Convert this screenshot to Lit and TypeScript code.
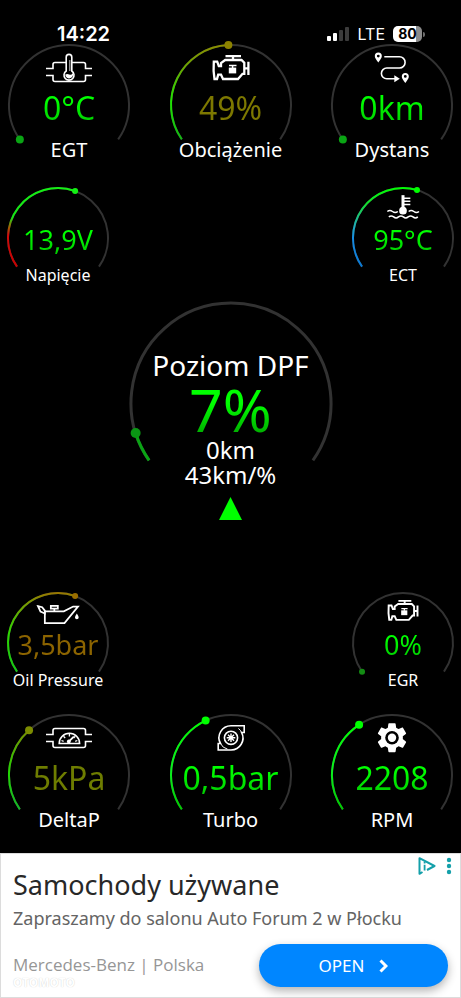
import { LitElement, html, svg, css, nothing } from "lit";
import { customElement, property } from "lit/decorators.js";
import { classMap } from "lit/directives/class-map.js";

const START = 145;
const SWEEP = 250;

/** Point on a circle; degrees run clockwise from the right. */
const polar = (c: number, r: number, deg: number) => {
  const a = (deg * Math.PI) / 180;
  return { x: c + r * Math.cos(a), y: c + r * Math.sin(a) };
};

const arc = (c: number, r: number, from: number, to: number) => {
  const a = polar(c, r, from);
  const b = polar(c, r, to);
  const large = to - from > 180 ? 1 : 0;
  return `M${a.x.toFixed(2)} ${a.y.toFixed(2)}A${r} ${r} 0 ${large} 1 ${b.x.toFixed(2)} ${b.y.toFixed(2)}`;
};

type Stop = [offset: number, color: string];

const canister = svg`
  <path d="M1 15.5H8V11.5q0-2 2-2H38.5q2 0 2 2V15.5H47M1 22.5H8V26.5q0 2 2 2H38.5q2 0 2-2V22.5H47" />`;

const engine = svg`
  <g stroke-width="2.3">
    <path d="M18.5 3.2H34M26 3.2V7" />
    <path d="M6.8 8.7H10.2L11.8 13H14V10L18.2 7H34.5L37.3 9.8V20.8H35.5L31 26H16L14 21.6H11.2L10 26H7.5L6.6 18Z" />
    <path d="M37.5 15.3H41M41.4 8.7V22" />
    <path d="M22 12.4H29.5M25.6 12V15" stroke-width="1.5" />
  </g>
  <rect x="21.8" y="14.6" width="7.4" height="5.8" fill="#fff" stroke="none" />`;

const pin = (x: number, y: number) => svg`
  <path fill="#fff" stroke="none" fill-rule="evenodd" transform=${`translate(${x} ${y})`}
    d="M0 5.6C-2.2 2.6-3.5 1-3.5-.9A3.5 3.5 0 0 1 3.5-.9C3.5 1 2.2 2.6 0 5.6ZM0-2.3A1.4 1.4 0 1 0 0 .5 1.4 1.4 0 1 0 0-2.3Z" />`;

const ICONS: Record<string, unknown> = {
  egt: svg`${canister}
    <path fill="#000" d="M21.2 18V4.2a2.8 2.8 0 0 1 5.6 0V18a5 5 0 1 1-5.6 0Z" />
    <path d="M24.8 7V18" stroke-width="1.4" opacity=".6" />
    <path fill="#fff" stroke="none" d="M20.3 21.5q2-1.2 4 0t3.5-1.5a3.9 3.9 0 1 1-7.5 1.5Z" />`,
  engine,
  route: svg`
    ${pin(10.3, 4)}
    <path d="M16.3 3.8H31.5a5.6 5.6 0 0 1 0 11.2H18.8a5.4 5.4 0 0 0 0 10.8H27" />
    <path fill="#fff" stroke="none" d="M26.3 22.3L31.8 25.8L26.3 29.3Z" />
    ${pin(37.3, 24.3)}`,
  coolant: svg`
    <path d="M24 2.4V20" stroke-width="3.6" />
    <circle cx="24" cy="21" r="4.6" fill="#fff" stroke="none" />
    <path d="M25 6H32.8M25 9.8H32.8M25 13.5H32.8" stroke-width="1.8" />
    <path stroke-width="1.8" d="M5.2 22q3-2.4 6.2 0t6.4 0M30.8 22q3-2.4 6.2 0t6.2 0M7 28.5q2.9-2.4 5.8 0t5.8 0 5.8 0 5.8 0 5.8 0 5.8 0" />`,
  oil: svg`
    <g stroke-width="2.1">
      <path d="M8.2 15.8H31L42.2 10H48L31.8 30H8.2Z" />
      <path d="M0 9.6L5 10.8L8.2 15V18.4L3 16.2Z" />
      <path d="M15.4 9.3H23.8V12.4H15.4ZM19.6 12.4V15.6" />
    </g>
    <path fill="#fff" stroke="none" d="M46.6 18.4q4.4 6.4 0 6.8-4.4-.4 0-6.8Z" />`,
  pressure: svg`
    <g transform="translate(0 -4)">${canister}</g>
    <path d="M14.2 20.5a10.2 10.2 0 0 1 20.4 0Z" />
    <path d="M16.5 17.5L18.6 18.3M18.5 13.3L20.2 15M24.4 11V13.4M30.3 13.3L28.6 15M32.3 17.5L30.2 18.3" stroke-width="1.3" />
    <path d="M23.5 18.8L28.8 13.6" stroke-width="1.8" />
    <circle cx="23.8" cy="18.5" r="1.9" fill="#fff" stroke="none" />`,
  turbo: svg`
    <path d="M24 2.7H37.2V9.5H34.6A12 12 0 0 1 24 27H11.2V20.5H13.5A12 12 0 0 1 24 2.7Z" />
    <path d="M13.5 20.5q2 4.5 7 5.6M34.6 9.5q-1-2.5-3.2-4" stroke-width="1" />
    <circle cx="24" cy="14.8" r="6.6" />
    <path d="M24 10.5V19.1M19.7 14.8H28.3M21 11.8L27 17.8M27 11.8L21 17.8" stroke-width="1.4" />`,
  gear: svg`
    <g stroke="none" fill="#fff">
      <path transform="translate(6.6 -2.7) scale(1.45)"
        d="M19.430 12.980c.04-.32.07-.64.07-.98s-.03-.66-.07-.98l2.110-1.650c.19-.15.24-.42.120-.64l-2-3.460c-.12-.22-.39-.3-.61-.22l-2.490 1c-.52-.4-1.080-.73-1.690-.98l-.38-2.650C14.460 2.180 14.250 2 14 2h-4c-.25 0-.46.18-.49.42l-.38 2.650c-.61.25-1.170.59-1.690.98l-2.490-1c-.23-.09-.49 0-.61.22l-2 3.460c-.13.22-.07.49.12.64l2.110 1.650c-.04.32-.07.65-.07.98s.03.66.07.98l-2.110 1.650c-.19.15-.24.42-.12.64l2 3.460c.12.22.39.3.61.22l2.490-1c.52.4 1.080.73 1.690.98l.38 2.650c.03.24.24.42.49.42h4c.25 0 .46-.18.49-.42l.38-2.650c.61-.25 1.170-.59 1.690-.98l2.490 1c.23.09.49 0 .61-.22l2-3.460c.12-.22.07-.49-.12-.64l-2.110-1.650Z" />
      <circle cx="24" cy="14.7" r="6.8" fill="#000" />
      <circle cx="24" cy="14.7" r="4.2" />
    </g>`,
};

const FADE: Record<string, Stop[]> = {
  green: [[0, "#0f0"], [0.6, "#0af01e"], [1, "#00c800"]],
  load: [[0, "#8c8c00"], [0.25, "#6aa800"], [0.6, "#1ee600"], [1, "#14b414"]],
  oil: [[0, "#9a7400"], [0.12, "#7e9600"], [0.5, "#2ed800"], [1, "#14c814"]],
  delta: [[0, "#7c8c00"], [0.16, "#7c8c00"], [0.6, "#22d800"], [1, "#14b428"]],
  volt: [[0, "#14f014"], [0.38, "#14e614"], [0.5, "#a06400"], [0.6, "#d20a0a"], [1, "#c80000"]],
  temp: [[0, "#0f0"], [0.22, "#14dc32"], [0.5, "#1eaabe"], [0.65, "#148ce6"], [1, "#0a78d2"]],
  low: [[0, "#0a9614"], [1, "#0aa514"]],
};

@customElement("arc-dial")
class ArcDial extends LitElement {
  @property({ type: Number }) radius = 60;
  @property({ type: Number }) level = 0;
  @property({ type: Number }) dot = 4;
  @property({ type: Number }) line = 2;
  @property() fade = "green";
  @property() tip = "#0f0";

  static styles = css`
    :host { display: block; }
    .dial { display: block; width: 100%; height: auto; overflow: visible; }
  `;

  render() {
    const c = this.radius + 1;
    const end = START + SWEEP * this.level;
    const knob = polar(c, this.radius, end);
    const floor = polar(c, this.radius, START).y;
    return html`
      <svg class="dial" viewBox=${`0 0 ${2 * c} ${2 * c}`} fill="none" aria-hidden="true">
        <defs>
          <linearGradient id="fade" gradientUnits="userSpaceOnUse" x1="0" y1="0" x2="0" y2=${floor}>
            ${FADE[this.fade].map(([o, color]) => svg`<stop offset=${o} stop-color=${color} />`)}
          </linearGradient>
        </defs>
        <path d=${arc(c, this.radius, START, START + SWEEP)} stroke="#323232" stroke-width=${this.line} />
        ${this.level > 0
          ? svg`<path d=${arc(c, this.radius, START, end)} stroke="url(#fade)" stroke-width=${this.line} />`
          : nothing}
        <circle cx=${knob.x} cy=${knob.y} r=${this.dot} fill=${this.tip} />
      </svg>`;
  }
}

interface Reading {
  label: string;
  value: string;
  level: number;
  icon?: string;
  fade: string;
  tip: string;
  tone?: string;
}

@customElement("gauge-card")
class GaugeCard extends LitElement {
  @property({ attribute: false }) reading!: Reading;
  @property({ type: Boolean }) small = false;

  static styles = css`
    :host { display: block; }
    .card {
      position: relative;
      display: flex;
      flex-direction: column;
      align-items: center;
      width: 122px;
      padding-top: 9px;
      box-sizing: border-box;
      white-space: nowrap;
    }
    .ring { position: absolute; inset: 0; }
    .icon {
      position: relative;
      width: 48px;
      height: 32px;
      fill: none;
      stroke: #fff;
      stroke-width: 1.6;
      overflow: visible;
    }
    .value {
      position: relative;
      margin-top: 5px;
      font-size: 32px;
      line-height: 36px;
      background: linear-gradient(#0f0 30%, #00c800);
      background-clip: text;
      color: transparent;
    }
    .olive { background: #7d7800; background-clip: text; }
    .moss { background: #6e7d00; background-clip: text; }
    .amber { background: #8c6400; background-clip: text; }
    .label { position: relative; margin-top: 12px; font-size: 20px; line-height: 24px; }
    .small { width: 102px; padding-top: 6px; }
    .small .icon { width: 40px; height: 27px; }
    .small .value { margin-top: 5px; font-size: 27px; line-height: 30px; }
    .small .label { margin-top: 10px; font-size: 16px; line-height: 20px; }
  `;

  render() {
    const r = this.reading;
    return html`
      <div class=${classMap({ card: true, small: this.small })}>
        <arc-dial class="ring" .radius=${this.small ? 50 : 60} .level=${r.level}
          .dot=${this.small ? 3 : 4} .fade=${r.fade} .tip=${r.tip}></arc-dial>
        <svg class="icon" viewBox="0 0 48 32" aria-hidden="true">${r.icon ? ICONS[r.icon] : nothing}</svg>
        <div class="value ${r.tone ?? ""}">${r.value}</div>
        <div class="label">${r.label}</div>
      </div>`;
  }
}

@customElement("status-bar")
class StatusBar extends LitElement {
  static styles = css`
    :host {
      display: flex;
      justify-content: space-between;
      align-items: center;
      height: 20px;
      padding: 24px 36px 0 57px;
      font-family: Inter, "Liberation Sans", sans-serif;
    }
    .time { font-size: 20px; line-height: 20px; font-weight: 600; }
    .right { display: flex; align-items: center; gap: 8px; }
    .bars { display: block; width: 24px; height: 15px; }
    .net { font-size: 16px; line-height: 20px; font-weight: 400; }
    .battery { display: flex; align-items: center; gap: 1px; }
    .cell {
      width: 29px;
      border-radius: 5px;
      background: linear-gradient(90deg, #fff 80%, #8c8c8c 80%);
      color: #000;
      font-size: 14px;
      line-height: 16px;
      font-weight: 700;
      text-align: center;
    }
    .cap { width: 2px; height: 5px; border-radius: 0 2px 2px 0; background: #6e6e6e; }
  `;

  render() {
    return html`
      <span class="time">14:22</span>
      <div class="right">
        <svg class="bars" viewBox="0 0 24 15" aria-hidden="true">
          <rect x="1" y="9" width="4" height="5" rx="1" fill="#fff" />
          <rect x="7" y="6" width="4" height="8" rx="1" fill="#fff" />
          <rect x="13" y="3" width="4" height="11" rx="1" fill="#3c3c3c" />
          <rect x="19" y="0" width="4" height="14" rx="1" fill="#3c3c3c" />
        </svg>
        <span class="net">LTE</span>
        <div class="battery"><span class="cell">80</span><span class="cap"></span></div>
      </div>`;
  }
}

@customElement("ad-banner")
class AdBanner extends LitElement {
  static styles = css`
    :host {
      display: block;
      position: relative;
      box-sizing: border-box;
      min-height: 144px;
      padding: 15px 12px 8px 12px;
      border: 1px solid #dcdcdc;
      background: #fff;
      color: #282828;
    }
    .title { margin: 0; font-size: 27px; line-height: 32px; font-weight: 400; }
    .text { margin: 3px 0 0; font-size: 18px; line-height: 28px; color: #646464; white-space: nowrap; }
    .foot { display: flex; justify-content: space-between; align-items: flex-start; margin-top: 12px; }
    .seller {
      margin-top: 9px;
      font-family: "Open Sans", "Noto Sans", sans-serif;
      font-size: 17px;
      line-height: 24px;
      color: #969696;
    }
    .brand {
      font-size: 12px;
      line-height: 12px;
      font-weight: 700;
      color: #fff;
      text-shadow: 0 0 1px #c8c8c8;
    }
    .open {
      display: flex;
      justify-content: center;
      align-items: center;
      gap: 15px;
      width: 189px;
      height: 43px;
      padding: 0;
      border: 0;
      border-radius: 22px;
      background: #0086ff;
      box-shadow: 0 4px 10px rgb(0 0 0 / 30%);
      color: #fff;
      font: 17px/24px "Noto Sans", sans-serif;
    }
    .chevron { width: 9px; height: 14px; fill: none; stroke: #fff; stroke-width: 3; }
    .corner { position: absolute; top: 3px; right: 8px; display: flex; gap: 10px; }
    .choice { display: block; padding: 0; border: 0; background: none; }
    .glyph { display: block; height: 18px; fill: none; stroke: #14a0aa; stroke-width: 2; }
  `;

  render() {
    return html`
      <div class="corner">
        <button class="choice" aria-label="AdChoices">
          <svg class="glyph" width="18" viewBox="0 0 18 18">
            <path d="M4.5 15L1.5 16.8V1.2L16.5 9L9 13" stroke-linejoin="round" />
            <path d="M6.6 7.8V13.5M6.6 4.8V6.4" stroke-width="1.8" />
          </svg>
        </button>
        <button class="choice" aria-label="Menu">
          <svg class="glyph" width="6" viewBox="0 0 6 18">
            <g fill="#14a0aa" stroke="none">
              <circle cx="3" cy="3" r="2.2" /><circle cx="3" cy="9" r="2.2" /><circle cx="3" cy="15" r="2.2" />
            </g>
          </svg>
        </button>
      </div>
      <h2 class="title">Samochody używane</h2>
      <p class="text">Zapraszamy do salonu Auto Forum 2 w Płocku</p>
      <div class="foot">
        <div>
          <div class="seller">Mercedes-Benz | Polska</div>
          <div class="brand">OTOMOTO</div>
        </div>
        <button class="open">
          OPEN
          <svg class="chevron" viewBox="0 0 9 14" aria-hidden="true"><path d="M1.5 1.5L7 7L1.5 12.5" /></svg>
        </button>
      </div>`;
  }
}

const TOP: Reading[] = [
  { label: "EGT", value: "0°C", level: 0, icon: "egt", fade: "low", tip: "#0aa514" },
  { label: "Obciążenie", value: "49%", level: 0.49, icon: "engine", fade: "load", tip: "#8c8200", tone: "olive" },
  { label: "Dystans", value: "0km", level: 0, icon: "route", fade: "low", tip: "#0aa514" },
];
const UPPER: Reading[] = [
  { label: "Napięcie", value: "13,9V", level: 0.58, fade: "volt", tip: "#14f014" },
  { label: "ECT", value: "95°C", level: 0.565, icon: "coolant", fade: "temp", tip: "#0f0" },
];
const LOWER: Reading[] = [
  { label: "Oil Pressure", value: "3,5bar", level: 0.58, icon: "oil", fade: "oil", tip: "#9a6e00", tone: "amber" },
  { label: "EGR", value: "0%", level: 0, icon: "engine", fade: "low", tip: "#148c14" },
];
const BOTTOM: Reading[] = [
  { label: "DeltaP", value: "5kPa", level: 0.333, icon: "pressure", fade: "delta", tip: "#7c8c00", tone: "moss" },
  { label: "Turbo", value: "0,5bar", level: 0.4, icon: "turbo", fade: "green", tip: "#0f0" },
  { label: "RPM", value: "2208", level: 0.367, icon: "gear", fade: "green", tip: "#0f0" },
];

@customElement("app-root")
class AppRoot extends LitElement {
  static styles = css`
    :host {
      display: flex;
      flex-direction: column;
      min-height: 100vh;
      background: #000;
      color: #fff;
      font-family: "Noto Sans", "Open Sans", sans-serif;
    }
    .board { display: flex; flex-direction: column; padding-bottom: 20px; }
    .row { display: flex; justify-content: space-between; padding: 0 8px; }
    .inner { padding: 0 7px; }
    .upper { margin-top: 25px; }
    .lower { margin-top: 72px; }
    .bottom { margin-top: 24px; }
    .dpf {
      position: relative;
      align-self: center;
      display: flex;
      flex-direction: column;
      align-items: center;
      box-sizing: border-box;
      width: 202px;
      margin-top: 17px;
      padding-top: 47px;
      white-space: nowrap;
    }
    .ring { position: absolute; inset: 0; }
    .name { position: relative; font-size: 28px; line-height: 32px; }
    .percent {
      position: relative;
      font-size: 59px;
      line-height: 56px;
      background: linear-gradient(#0f0 40%, #00b400 90%);
      background-clip: text;
      color: transparent;
    }
    .detail { position: relative; font-size: 24px; line-height: 25px; }
    .arrow { display: block; width: 23px; height: 23px; margin-top: 10px; fill: #0f0; }
    .ad { margin-top: auto; }
  `;

  private row(list: Reading[], name: string, small = false) {
    return html`
      <div class="row ${name} ${small ? "inner" : ""}">
        ${list.map((r) => html`<gauge-card .reading=${r} ?small=${small}></gauge-card>`)}
      </div>`;
  }

  render() {
    return html`
      <status-bar></status-bar>
      <main class="board">
        ${this.row(TOP, "top")}
        ${this.row(UPPER, "upper", true)}
        <section class="dpf">
          <arc-dial class="ring" .radius=${100} .level=${0.07} .dot=${5} .line=${3} .fade=${"low"} .tip=${"#0a9614"}></arc-dial>
          <div class="name">Poziom DPF</div>
          <div class="percent">7%</div>
          <div class="detail">0km</div>
          <div class="detail">43km/%</div>
          <svg class="arrow" viewBox="0 0 23 23" aria-hidden="true"><path d="M11.5 0L23 23H0Z" /></svg>
        </section>
        ${this.row(LOWER, "lower", true)}
        ${this.row(BOTTOM, "bottom")}
      </main>
      <ad-banner class="ad"></ad-banner>`;
  }
}
